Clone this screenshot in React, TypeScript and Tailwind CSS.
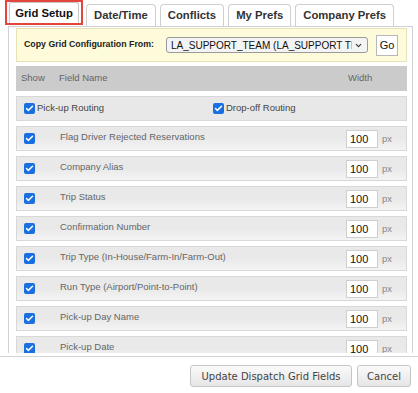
import { Check, ChevronDown } from "lucide-react";

const fields = [
  "Flag Driver Rejected Reservations",
  "Company Alias",
  "Trip Status",
  "Confirmation Number",
  "Trip Type (In-House/Farm-In/Farm-Out)",
  "Run Type (Airport/Point-to-Point)",
  "Pick-up Day Name",
  "Pick-up Date",
];

const tabs = ["Date/Time", "Conflicts", "My Prefs", "Company Prefs"];

function Box() {
  return (
    <span className="flex h-[11px] w-[11px] items-center justify-center rounded-[2px] bg-[#1a6fe0]">
      <Check className="h-[9px] w-[9px] text-white" strokeWidth={4} />
    </span>
  );
}

export default function App() {
  return (
    <div
      className="h-[393px] w-[418px] overflow-hidden bg-white"
      style={{ fontFamily: '"Liberation Sans", Arial, sans-serif' }}
    >
      {/* tabs */}
      <div className="flex h-[26px] items-end pl-[5px]">
        <div className="flex h-[25px] w-[78px] items-end border-2 border-[#e2463c] px-[2px] mb-[1px]">
          <div className="flex h-[21px] w-full items-center justify-center rounded-t-[3px] border border-b-0 border-[#c8c8c8] bg-white text-[11.3px] font-bold text-[#111]">
            Grid Setup
          </div>
        </div>
        <div className="ml-[3px] flex gap-[4px]">
          {tabs.map((t) => (
            <div
              key={t}
              className="flex h-[22px] items-center rounded-t-[4px] border border-b-0 border-[#cfcfcf] bg-white px-[7px] text-[11.3px] font-bold text-[#333]"
            >
              {t}
            </div>
          ))}
        </div>
      </div>

      {/* panel */}
      <div className="ml-[8px] mr-[5px] h-[327px] overflow-hidden border-l border-r border-t border-[#d2d2d2] pl-[7px] pr-[5px] pt-[1px]">
        <div className="flex h-[34px] items-center border border-[#e6e2b8] bg-[#fdfbd9] pl-[7px] pr-[8px]">
          <span className="text-[8.8px] font-bold text-[#222]">
            Copy Grid Configuration From:
          </span>
          <div className="ml-auto flex h-[16px] w-[202px] items-center rounded-[3px] border border-[#9a9a9a] bg-[#f4f4f4] pl-[4px] pr-[4px]">
            <span className="min-w-0 flex-1 overflow-hidden whitespace-nowrap text-[10px] text-[#111]">
              LA_SUPPORT_TEAM (LA_SUPPORT TE/
            </span>
            <ChevronDown className="ml-[2px] h-[9px] w-[9px] shrink-0 text-[#333]" strokeWidth={3} />
          </div>
          <div className="ml-[8px] flex h-[21px] w-[22px] items-center justify-center border border-[#b8b8b8] bg-white text-[11px] text-[#111]">
            Go
          </div>
        </div>

        <div className="mt-[4px] flex h-[25px] items-start bg-[#cbcbcb] pt-[5px] text-[9.5px] text-[#666]">
          <span className="w-[43px] pl-[5px]">Show</span>
          <span>Field Name</span>
          <span className="ml-auto w-[59px]">Width</span>
        </div>

        <div className="mt-[5px] flex flex-col gap-[5px]">
          <div className="flex h-[25px] items-center border border-[#d8d8d8] bg-[#e8e8e8] pl-[7px] text-[9.5px] text-[#444]">
            <Box />
            <span className="ml-[2px] w-[176px]">Pick-up Routing</span>
            <Box />
            <span className="ml-[2px]">Drop-off Routing</span>
          </div>
          {fields.map((f) => (
            <div
              key={f}
              className="flex h-[25px] items-start border border-[#d8d8d8] bg-gradient-to-b from-[#e9e9e9] via-[#e9e9e9] to-[#f4f4f4] text-[9.5px] text-[#666]"
            >
              <span className="w-[43px] pl-[7px] pt-[6px]">
                <Box />
              </span>
              <span className="pt-[3px]">{f}</span>
              <div className="ml-auto flex items-center pr-[14px] pt-[3px]">
                <span className="flex h-[18px] w-[32px] items-center border border-[#cfcfcf] bg-white pl-[3px] text-[11px] text-[#111]">
                  100
                </span>
                <span className="ml-[4px] text-[9.5px] text-[#888]">px</span>
              </div>
            </div>
          ))}
        </div>
      </div>

      {/* footer */}
      <div className="mt-[3px] h-[1px] bg-[#d4d4d4]" />
      <div
        className="flex justify-end gap-[5px] pr-[7px] pt-[8px]"
        style={{ fontFamily: '"DejaVu Sans", Verdana, sans-serif' }}
      >
        <div className="flex h-[22px] w-[162px] items-center justify-center rounded-[3px] border border-[#c6c6c6] bg-gradient-to-b from-[#fafafa] to-[#e6e6e6] text-[10px] text-[#444]">
          Update Dispatch Grid Fields
        </div>
        <div className="flex h-[22px] w-[54px] items-center justify-center rounded-[3px] border border-[#c6c6c6] bg-gradient-to-b from-[#fafafa] to-[#e6e6e6] text-[10px] text-[#444]">
          Cancel
        </div>
      </div>
    </div>
  );
}
